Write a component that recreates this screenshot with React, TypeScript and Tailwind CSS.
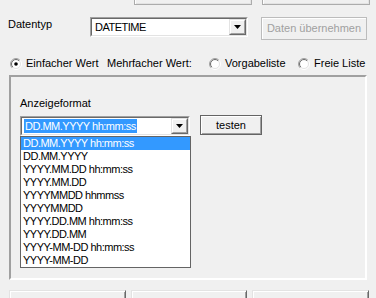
import React from "react";

const items = [
  "DD.MM.YYYY hh:mm:ss",
  "DD.MM.YYYY",
  "YYYY.MM.DD hh:mm:ss",
  "YYYY.MM.DD",
  "YYYYMMDD hhmmss",
  "YYYYMMDD",
  "YYYY.DD.MM hh:mm:ss",
  "YYYY.DD.MM",
  "YYYY-MM-DD hh:mm:ss",
  "YYYY-MM-DD",
];

function Radio({ checked, id }: { checked?: boolean; id: string }) {
  return (
    <svg width="12" height="12" viewBox="0 0 12 12" className="shrink-0">
      <defs>
        <linearGradient id={`o${id}`} x1="0" y1="0" x2="1" y2="1">
          <stop offset="0.45" stopColor="#a0a0a0" />
          <stop offset="0.55" stopColor="#ffffff" />
        </linearGradient>
        <linearGradient id={`i${id}`} x1="0" y1="0" x2="1" y2="1">
          <stop offset="0.45" stopColor="#696969" />
          <stop offset="0.55" stopColor="#e3e3e3" />
        </linearGradient>
      </defs>
      <circle cx="6" cy="6" r="5.5" fill="none" stroke={`url(#o${id})`} />
      <circle cx="6" cy="6" r="4.5" fill="#ffffff" stroke={`url(#i${id})`} />
      {checked && <circle cx="6" cy="6" r="1.8" fill="#000000" />}
    </svg>
  );
}

function DropButton() {
  return (
    <div className="flex w-[17px] shrink-0 border-t border-l border-t-[#e3e3e3] border-l-[#e3e3e3] border-b border-r border-b-[#696969] border-r-[#696969] bg-[#f0f0f0]">
      <div className="flex flex-1 items-center justify-center border-t border-l border-t-white border-l-white border-b border-r border-b-[#a0a0a0] border-r-[#a0a0a0]">
        <svg width="7" height="4" viewBox="0 0 7 4">
          <polygon points="0,0 7,0 3.5,4" fill="#000000" />
        </svg>
      </div>
    </div>
  );
}

function Combo({ width, children }: { width: string; children: React.ReactNode }) {
  return (
    <div
      className={`flex h-[20px] ${width} shrink-0 border-t border-l border-t-[#a0a0a0] border-l-[#a0a0a0] border-b border-r border-b-white border-r-white`}
    >
      <div className="flex flex-1 border-t border-l border-t-[#696969] border-l-[#696969] border-b border-r border-b-[#e3e3e3] border-r-[#e3e3e3] bg-white">
        <div className="flex flex-1 items-center pl-[2px] text-[11px] leading-[14px] tracking-[-0.5px] text-black">
          {children}
        </div>
        <DropButton />
      </div>
    </div>
  );
}

export default function App() {
  return (
    <div className="relative flex h-[298px] w-[376px] flex-col overflow-hidden bg-[#f0f0f0] font-['Liberation_Sans',Arial,sans-serif] text-[11px] leading-[13px] text-black">
      {/* top buttons (mostly cut off) */}
      <div className="flex h-[5px] shrink-0 items-end gap-[10px] pl-[134px]">
        <div className="h-[23px] w-[118px] shrink-0 border border-[#acacac] bg-[#f0f0f0] shadow-[inset_1px_1px_0_#ffffff,inset_-1px_-1px_0_#e3e3e3]" />
        <div className="h-[23px] w-[108px] shrink-0 border border-[#acacac] bg-[#f0f0f0] shadow-[inset_1px_1px_0_#ffffff,inset_-1px_-1px_0_#e3e3e3]" />
      </div>

      {/* Datentyp row */}
      <div className="mt-[12px] flex h-[23px] shrink-0 items-start">
        <div className="w-[90px] shrink-0 pl-[8px] pt-[1px]">Datentyp</div>
        <Combo width="w-[158px]">
          <span className="pl-[1px]">DATETIME</span>
        </Combo>
        <div className="ml-[13px] flex h-[23px] w-[106px] shrink-0 items-center justify-center border border-[#bcbcbc] bg-[#f0f0f0] text-[#a0a0a0] shadow-[inset_1px_1px_0_#ffffff]">
          Daten übernehmen
        </div>
      </div>

      {/* radio row */}
      <div className="mt-[17px] flex h-[13px] shrink-0 items-center">
        <div className="ml-[10px] flex w-[97px] shrink-0 items-center gap-[4px]">
          <Radio checked id="a" />
          <span>Einfacher Wert</span>
        </div>
        <div className="w-[102px] shrink-0">Mehrfacher Wert:</div>
        <div className="flex w-[89px] shrink-0 items-center gap-[4px]">
          <Radio id="b" />
          <span>Vorgabeliste</span>
        </div>
        <div className="flex shrink-0 items-center gap-[4px]">
          <Radio id="c" />
          <span>Freie Liste</span>
        </div>
      </div>

      {/* group box */}
      <div className="mx-[9px] mt-[5px] flex h-[205px] shrink-0 flex-col border-2 border-t-[#a0a0a0] border-l-[#a0a0a0] border-r-white border-b-white px-[9px] pt-[20px]">
        <div>Anzeigeformat</div>
        <div className="mt-[6px] flex items-start">
          <div className="relative">
            <Combo width="w-[170px]">
              <span className="bg-[#3399ff] px-[1px] text-white">DD.MM.YYYY hh:mm:ss</span>
            </Combo>
            <div className="absolute left-0 top-full w-[171px] border border-[#646464] bg-white text-[11px] tracking-[-0.5px]">
              {items.map((t, i) => (
                <div
                  key={t}
                  className={
                    i === 0
                      ? "h-[13px] bg-[#3399ff] pl-[2px] leading-[13px] text-white"
                      : "h-[13px] pl-[2px] leading-[13px] text-black"
                  }
                >
                  {t}
                </div>
              ))}
            </div>
          </div>
          <div className="ml-[10px] -mt-[1px] flex h-[20px] w-[62px] items-center justify-center border border-[#646464] bg-[#f0f0f0] shadow-[inset_1px_1px_0_#ffffff,inset_-1px_-1px_0_#a0a0a0]">
            testen
          </div>
        </div>
      </div>

      {/* bottom buttons */}
      <div className="mt-[10px] flex shrink-0 gap-[5px] pl-[9px]">
        <div className="h-[23px] w-[117px] shrink-0 border-t border-l border-t-[#e3e3e3] border-l-[#e3e3e3] border-r border-r-[#696969] bg-[#f0f0f0] shadow-[inset_1px_1px_0_#ffffff,inset_-1px_0_0_#a0a0a0]" />
        <div className="h-[23px] w-[116px] shrink-0 border-t border-l border-t-[#e3e3e3] border-l-[#e3e3e3] border-r border-r-[#696969] bg-[#f0f0f0] shadow-[inset_1px_1px_0_#ffffff,inset_-1px_0_0_#a0a0a0]" />
        <div className="h-[23px] w-[117px] shrink-0 border-t border-l border-t-[#e3e3e3] border-l-[#e3e3e3] border-r border-r-[#696969] bg-[#f0f0f0] shadow-[inset_1px_1px_0_#ffffff,inset_-1px_0_0_#a0a0a0]" />
      </div>
    </div>
  );
}
